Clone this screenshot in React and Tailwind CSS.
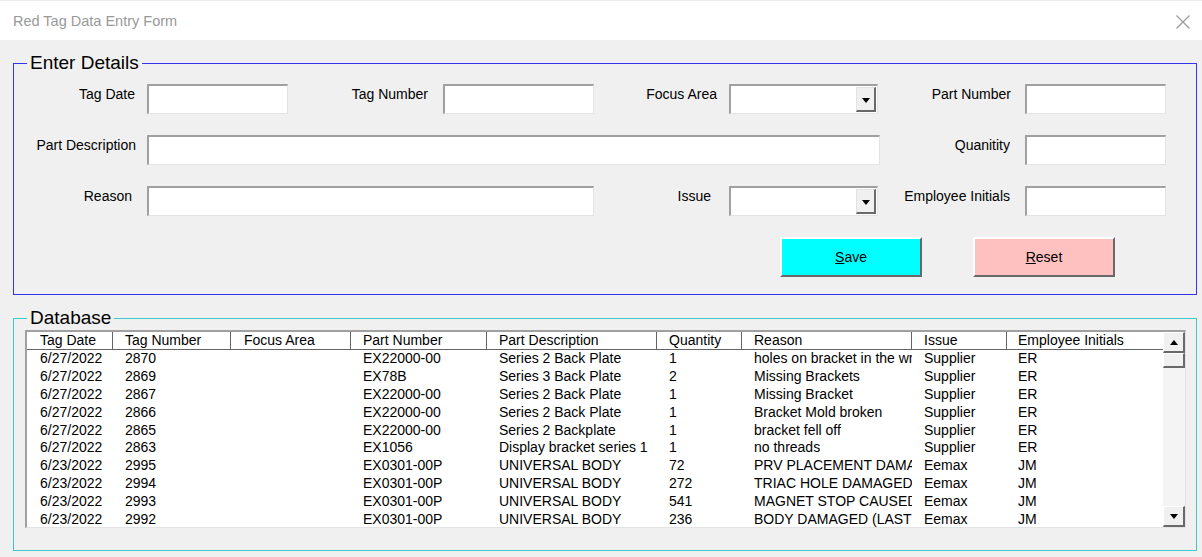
const FONT = "font-['Liberation_Sans',Arial,sans-serif]"

const COLS = [
  { key: 'date', label: 'Tag Date', w: 'w-[86px] pl-[13px]' },
  { key: 'tag', label: 'Tag Number', w: 'w-[118px] pl-[12px]' },
  { key: 'focus', label: 'Focus Area', w: 'w-[120px] pl-[13px]' },
  { key: 'part', label: 'Part Number', w: 'w-[136px] pl-[12px]' },
  { key: 'desc', label: 'Part Description', w: 'w-[170px] pl-[12px]' },
  { key: 'qty', label: 'Quantity', w: 'w-[85px] pl-[12px]' },
  { key: 'reason', label: 'Reason', w: 'w-[170px] pl-[12px]' },
  { key: 'issue', label: 'Issue', w: 'w-[95px] pl-[12px]' },
  { key: 'emp', label: 'Employee Initials', w: 'w-[153px] pl-[11px]' },
]

const ROWS = [
  { date: '6/27/2022', tag: '2870', focus: '', part: 'EX22000-00', desc: 'Series 2 Back Plate', qty: '1', reason: 'holes on bracket in the wrong place', issue: 'Supplier', emp: 'ER' },
  { date: '6/27/2022', tag: '2869', focus: '', part: 'EX78B', desc: 'Series 3 Back Plate', qty: '2', reason: 'Missing Brackets', issue: 'Supplier', emp: 'ER' },
  { date: '6/27/2022', tag: '2867', focus: '', part: 'EX22000-00', desc: 'Series 2 Back Plate', qty: '1', reason: 'Missing Bracket', issue: 'Supplier', emp: 'ER' },
  { date: '6/27/2022', tag: '2866', focus: '', part: 'EX22000-00', desc: 'Series 2 Back Plate', qty: '1', reason: 'Bracket Mold broken', issue: 'Supplier', emp: 'ER' },
  { date: '6/27/2022', tag: '2865', focus: '', part: 'EX22000-00', desc: 'Series 2 Backplate', qty: '1', reason: 'bracket fell off', issue: 'Supplier', emp: 'ER' },
  { date: '6/27/2022', tag: '2863', focus: '', part: 'EX1056', desc: 'Display bracket series 1', qty: '1', reason: 'no threads', issue: 'Supplier', emp: 'ER' },
  { date: '6/23/2022', tag: '2995', focus: '', part: 'EX0301-00P', desc: 'UNIVERSAL BODY', qty: '72', reason: 'PRV PLACEMENT DAMAGED', issue: 'Eemax', emp: 'JM' },
  { date: '6/23/2022', tag: '2994', focus: '', part: 'EX0301-00P', desc: 'UNIVERSAL BODY', qty: '272', reason: 'TRIAC HOLE DAMAGED BY', issue: 'Eemax', emp: 'JM' },
  { date: '6/23/2022', tag: '2993', focus: '', part: 'EX0301-00P', desc: 'UNIVERSAL BODY', qty: '541', reason: 'MAGNET STOP CAUSED DAMAGE', issue: 'Eemax', emp: 'JM' },
  { date: '6/23/2022', tag: '2992', focus: '', part: 'EX0301-00P', desc: 'UNIVERSAL BODY', qty: '236', reason: 'BODY DAMAGED (LAST TIME)', issue: 'Eemax', emp: 'JM' },
]

function Label({ w, children }) {
  return (
    <div className={`${w} shrink-0 text-right text-[14px] leading-[18px] pt-[1px] text-black whitespace-nowrap`}>
      {children}
    </div>
  )
}

function Field({ w }) {
  return (
    <div
      className={`${w} shrink-0 h-[30px] bg-white border-t-2 border-l-2 border-t-[#a0a0a0] border-l-[#a0a0a0] border-b border-r border-b-[#e3e3e3] border-r-[#e3e3e3]`}
    />
  )
}

function Tri({ up }) {
  return (
    <svg width="8" height="5" viewBox="0 0 8 5">
      <path d={up ? 'M0 5h8L4 0z' : 'M0 0h8L4 5z'} fill="#000" />
    </svg>
  )
}

function Combo({ className }) {
  return (
    <div
      className={`${className} shrink-0 w-[149px] h-[30px] bg-white border-t-2 border-l-2 border-t-[#a0a0a0] border-l-[#a0a0a0] border-b border-r border-b-[#e3e3e3] border-r-[#e3e3e3] flex justify-end p-[1px]`}
    >
      <div className="w-[20px] h-full bg-[#f0f0f0] border-t border-l border-t-[#e3e3e3] border-l-[#e3e3e3] border-b-2 border-r-2 border-b-[#696969] border-r-[#696969] flex items-center justify-center pt-[2px]">
        <Tri />
      </div>
    </div>
  )
}

function RaisedButton({ bg, children }) {
  return (
    <button
      className={`w-[142px] h-[40px] ${bg} border-t-2 border-l-2 border-white border-b-2 border-r-2 border-b-[#696969] border-r-[#696969] text-[14px] text-black flex items-center justify-center`}
    >
      {children}
    </button>
  )
}

function ScrollBtn({ up }) {
  return (
    <div className="h-[21px] shrink-0 bg-[#f0f0f0] border-t border-l border-white border-b-2 border-r-2 border-b-[#696969] border-r-[#696969] flex items-center justify-center">
      <Tri up={up} />
    </div>
  )
}

export default function App() {
  return (
    <div className={`${FONT} w-[1202px] h-[557px] bg-[#f0f0f0] overflow-hidden flex flex-col`}>
      {/* title bar */}
      <div className="h-[40px] shrink-0 bg-white border-t border-[#ececec] flex items-center justify-between pl-[13px] pr-[12px] pt-[2px]">
        <span className="text-[14.5px] text-[#999999]">Red Tag Data Entry Form</span>
        <svg width="14" height="14" viewBox="0 0 14 14">
          <path d="M0.5 0.5L13.5 13.5M13.5 0.5L0.5 13.5" stroke="#9a9a9a" strokeWidth="1.2" />
        </svg>
      </div>

      {/* Enter Details */}
      <fieldset className="ml-[13px] mt-[11px] w-[1184px] border border-[#3535f0] pb-[17px]">
        <legend className="ml-[13px] px-[3px] text-[19px] leading-[24px] text-black">Enter Details</legend>
        <div className="flex flex-col gap-[21px] pt-[9px]">
          <div className="flex items-start">
            <Label w="w-[121px]">Tag Date</Label>
            <div className="ml-[12px]" />
            <Field w="w-[141px]" />
            <Label w="w-[140px]">Tag Number</Label>
            <div className="ml-[15px]" />
            <Field w="w-[151px]" />
            <Label w="w-[123px]">Focus Area</Label>
            <Combo className="ml-[12px]" />
            <Label w="w-[133px]">Part Number</Label>
            <div className="ml-[14px]" />
            <Field w="w-[141px]" />
          </div>
          <div className="flex items-start">
            <Label w="w-[122px]">Part Description</Label>
            <div className="ml-[11px]" />
            <Field w="w-[733px]" />
            <Label w="w-[130px]">Quanitity</Label>
            <div className="ml-[15px]" />
            <Field w="w-[141px]" />
          </div>
          <div className="flex items-start">
            <Label w="w-[118px]">Reason</Label>
            <div className="ml-[15px]" />
            <Field w="w-[447px]" />
            <Label w="w-[117px]">Issue</Label>
            <Combo className="ml-[18px]" />
            <Label w="w-[132px]">Employee Initials</Label>
            <div className="ml-[15px]" />
            <Field w="w-[141px]" />
          </div>
          <div className="flex justify-end gap-[51px] pr-[81px]">
            <RaisedButton bg="bg-[#00ffff]">
              <span><u>S</u>ave</span>
            </RaisedButton>
            <RaisedButton bg="bg-[#ffc0c0]">
              <span><u>R</u>eset</span>
            </RaisedButton>
          </div>
        </div>
      </fieldset>

      {/* Database */}
      <fieldset className="ml-[13px] mt-[11px] w-[1184px] border border-[#3ccaca] pb-[22px]">
        <legend className="ml-[13px] px-[3px] text-[19px] leading-[24px] text-black">Database</legend>
        <div className="ml-[11px] w-[1161px] h-[198px] bg-white border-t-2 border-l-2 border-t-[#a0a0a0] border-l-[#a0a0a0] border-b border-r border-b-[#e3e3e3] border-r-[#e3e3e3] flex">
          <div className="flex-1 flex flex-col overflow-hidden">
            <div className="flex h-[18px] shrink-0 border-b border-[#646464]">
              {COLS.map((c, i) => (
                <div
                  key={c.key}
                  className={`${c.w} shrink-0 text-[14px] leading-[17px] whitespace-nowrap overflow-hidden ${i < COLS.length - 1 ? 'border-r border-[#646464]' : ''}`}
                >
                  {c.label}
                </div>
              ))}
            </div>
            {ROWS.map((r, ri) => (
              <div key={ri} className="flex h-[17.9px] shrink-0">
                {COLS.map((c) => (
                  <div
                    key={c.key}
                    className={`${c.w} shrink-0 pr-[2px] text-[14px] leading-[17.9px] whitespace-nowrap overflow-hidden text-black`}
                  >
                    {r[c.key]}
                  </div>
                ))}
              </div>
            ))}
          </div>
          <div className="w-[22px] shrink-0 flex flex-col">
            <ScrollBtn up />
            <div className="h-[15px] shrink-0 bg-[#f0f0f0] border-t border-l border-white border-b-2 border-r-2 border-b-[#696969] border-r-[#696969]" />
            <div className="flex-1 bg-[#f4f4f4]" />
            <ScrollBtn />
          </div>
        </div>
      </fieldset>
    </div>
  )
}
